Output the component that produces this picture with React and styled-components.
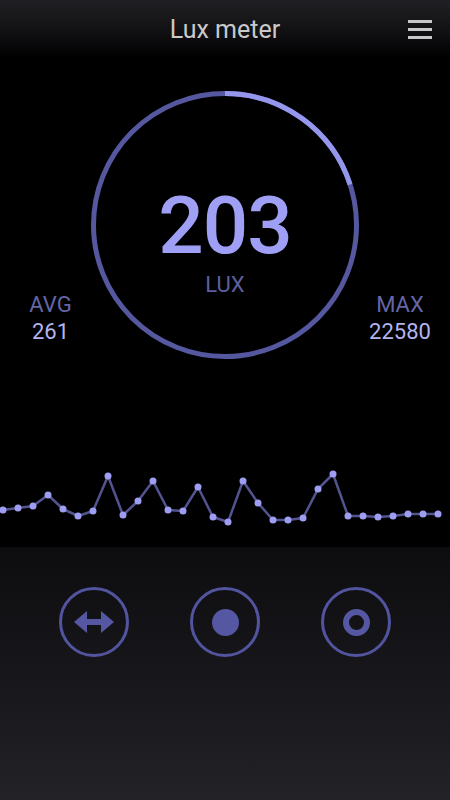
import styled, { createGlobalStyle } from 'styled-components';

const points = [
	510, 508, 506, 495, 509, 516, 511, 476, 515, 501, 481, 510, 511, 487, 517,
	522, 481, 503, 520, 520, 518, 489, 474, 516, 516, 517, 516, 514, 514, 514
];

const RING_R = 131.5;
const RING_LEN = 2 * Math.PI * RING_R;

const App = () => {
	const chartPts = points.map((y, i) => [3 + i * 15, y - 460]);

	return (
		<>
			<GlobalStyle />
			<Screen>
				<Header>
					<Title>Lux meter</Title>
					<MenuButton aria-label='menu'>
						<span />
						<span />
						<span />
					</MenuButton>
				</Header>

				<Readout>
					<Stat $side='left'>
						<StatLabel>AVG</StatLabel>
						<StatValue>261</StatValue>
					</Stat>

					<Gauge>
						<Ring viewBox='0 0 268 268'>
							<circle cx='134' cy='134' r={RING_R} fill='none' stroke='#55579f' strokeWidth='5' />
							<circle
								cx='134'
								cy='134'
								r={RING_R}
								fill='none'
								stroke='#9597ec'
								strokeWidth='5'
								strokeDasharray={`${RING_LEN * 0.2} ${RING_LEN}`}
								transform='rotate(-90 134 134)'
							/>
						</Ring>
						<Reading>203</Reading>
						<Unit>LUX</Unit>
					</Gauge>

					<Stat $side='right'>
						<StatLabel>MAX</StatLabel>
						<StatValue>22580</StatValue>
					</Stat>
				</Readout>

				<Chart viewBox='0 0 450 87' width='450' height='87'>
					<polyline
						points={chartPts.map(p => p.join(',')).join(' ')}
						fill='none'
						stroke='#52538f'
						strokeWidth='2.5'
						strokeLinejoin='round'
					/>
					{chartPts.map(([x, y], i) => (
						<circle key={i} cx={x} cy={y} r='3.5' fill='#9d9ef2' />
					))}
				</Chart>

				<Controls>
					<RoundButton aria-label='range'>
						<svg width='40' height='22' viewBox='0 0 40 22'>
							<polygon
								points='0,11 13,0 13,8 27,8 27,0 40,11 27,22 27,14 13,14 13,22'
								fill='#5557a3'
							/>
						</svg>
					</RoundButton>
					<RoundButton aria-label='record'>
						<Dot />
					</RoundButton>
					<RoundButton aria-label='hold'>
						<RingDot />
					</RoundButton>
				</Controls>
			</Screen>
		</>
	);
};

export default App;

const GlobalStyle = createGlobalStyle`
	html, body {
		margin: 0;
		padding: 0;
		background: #000;
	}
	body {
		font-family: Roboto, 'Liberation Sans', sans-serif;
	}
`;

const Screen = styled.div`
	width: 450px;
	height: 800px;
	display: flex;
	flex-direction: column;
	background: #000;
	overflow: hidden;
`;

const Header = styled.header`
	height: 58px;
	flex-shrink: 0;
	display: flex;
	align-items: center;
	justify-content: center;
	position: relative;
	background: linear-gradient(to bottom, #202024 0%, #111114 55%, #000 100%);
`;

const Title = styled.h1`
	margin: 0;
	font-size: 25px;
	font-weight: 400;
	color: #c9c9c9;
`;

const MenuButton = styled.button`
	position: absolute;
	right: 18px;
	top: 20px;
	width: 24px;
	height: 19px;
	padding: 0;
	border: none;
	background: none;
	display: flex;
	flex-direction: column;
	justify-content: space-between;

	span {
		display: block;
		height: 3px;
		background: #c8c8c8;
	}
`;

const Readout = styled.section`
	display: grid;
	grid-template-columns: 1fr 268px 1fr;
	padding-top: 33px;
`;

const Stat = styled.div`
	align-self: end;
	margin-bottom: 14px;
	display: flex;
	flex-direction: column;
	align-items: center;
	padding-left: ${p => (p.$side === 'left' ? '10px' : '0')};
	padding-right: ${p => (p.$side === 'right' ? '9px' : '0')};
`;

const StatLabel = styled.div`
	font-size: 22px;
	line-height: 27px;
	color: #6466a6;
`;

const StatValue = styled.div`
	font-size: 22px;
	line-height: 27px;
	color: #b3b4ee;
`;

const Gauge = styled.div`
	position: relative;
	width: 268px;
	height: 268px;
	display: flex;
	flex-direction: column;
	align-items: center;
	padding-top: 95px;
	box-sizing: border-box;
`;

const Ring = styled.svg`
	position: absolute;
	inset: 0;
	width: 268px;
	height: 268px;
`;

const Reading = styled.div`
	position: relative;
	font-size: 80px;
	line-height: 80px;
	font-weight: 500;
	letter-spacing: -1px;
	color: #9fa0f5;
`;

const Unit = styled.div`
	position: relative;
	margin-top: 6px;
	font-size: 22px;
	line-height: 26px;
	color: #5d5f9e;
`;

const Chart = styled.svg`
	display: block;
	margin-top: 101px;
	flex-shrink: 0;
`;

const Controls = styled.footer`
	flex: 1;
	display: flex;
	justify-content: center;
	align-items: flex-start;
	gap: 61px;
	padding-top: 40px;
	background: linear-gradient(to bottom, #0d0d10 0%, #18181c 55%, #222227 100%);
`;

const RoundButton = styled.button`
	width: 70px;
	height: 70px;
	box-sizing: border-box;
	border-radius: 50%;
	border: 3px solid #5254a0;
	background: transparent;
	padding: 0;
	display: flex;
	align-items: center;
	justify-content: center;
`;

const Dot = styled.span`
	width: 27px;
	height: 27px;
	border-radius: 50%;
	background: #5557a3;
`;

const RingDot = styled.span`
	width: 27px;
	height: 27px;
	box-sizing: border-box;
	border-radius: 50%;
	border: 6px solid #5557a3;
`;
